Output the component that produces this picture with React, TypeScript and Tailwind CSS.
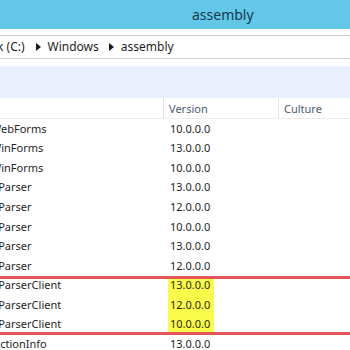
import React from "react";

const rows: { name: string; ml: number; ver: string; hl?: boolean }[] = [
  { name: "WebForms", ml: -9, ver: "10.0.0.0" },
  { name: "WinForms", ml: -9, ver: "13.0.0.0" },
  { name: "WinForms", ml: -9, ver: "10.0.0.0" },
  { name: "eParser", ml: -8, ver: "13.0.0.0" },
  { name: "eParser", ml: -8, ver: "12.0.0.0" },
  { name: "eParser", ml: -8, ver: "10.0.0.0" },
  { name: "eParser", ml: -8, ver: "13.0.0.0" },
  { name: "eParser", ml: -8, ver: "12.0.0.0" },
  { name: "eParserClient", ml: -8, ver: "13.0.0.0", hl: true },
  { name: "eParserClient", ml: -8, ver: "12.0.0.0", hl: true },
  { name: "eParserClient", ml: -8, ver: "10.0.0.0", hl: true },
  { name: "ectionInfo", ml: -6, ver: "13.0.0.0" },
];

function Arrow() {
  return (
    <svg width="5" height="8" viewBox="0 0 5 8" className="shrink-0">
      <polygon points="0,0 5,4 0,8" fill="#1a1a1a" />
    </svg>
  );
}

export default function App() {
  return (
    <div
      className="relative w-[350px] h-[350px] overflow-hidden bg-white text-[#1e1e1e]"
      style={{ fontFamily: '"Noto Sans", "Open Sans", sans-serif' }}
    >
      <div className="h-[29px] bg-[#62c7e9] flex items-center pl-[192px] text-[14px] text-[#15394a]">
        assembly
      </div>
      <div className="h-[6px]" />
      <div className="h-[24px] border-y border-[#cfcfcf] flex items-center text-[12px] text-[#1e1e1e] whitespace-nowrap">
        <span className="ml-[-3px]">k (C:)</span>
        <span className="ml-[11px] flex"><Arrow /></span>
        <span className="ml-[7px]">Windows</span>
        <span className="ml-[10px] flex"><Arrow /></span>
        <span className="ml-[7px]">assembly</span>
      </div>
      <div className="h-[7px]" />
      <div className="h-[32px] bg-[#e9f0fb]" />
      <div className="h-[21px] flex text-[11px] text-[#4c5d70] border-b border-[#eeeeee]">
        <div className="w-[164px] border-r border-[#e3e3e3]" />
        <div className="w-[115px] border-r border-[#e3e3e3] flex items-center pt-[3px] pl-[5px]">Version</div>
        <div className="flex-1 flex items-center pt-[3px] pl-[5px]">Culture</div>
      </div>
      <div className="flex flex-col">
        {rows.map((r, i) => (
          <div key={i} className="h-[19.6px] flex items-center text-[11px] whitespace-nowrap">
            <div className="w-[168px] overflow-hidden">
              <span style={{ marginLeft: r.ml }}>{r.name}</span>
            </div>
            <div
              className={
                r.hl
                  ? "h-full flex items-center bg-[#fbfb4a] pl-[2px] pr-[4px] text-[#2a2a10]"
                  : "h-full flex items-center pl-[2px] pr-[4px]"
              }
            >
              {r.ver}
            </div>
          </div>
        ))}
      </div>
      <div className="absolute left-[-5px] right-[-5px] top-[276px] h-[59px] border-y-[3px] border-[#e25757]" />
    </div>
  );
}
